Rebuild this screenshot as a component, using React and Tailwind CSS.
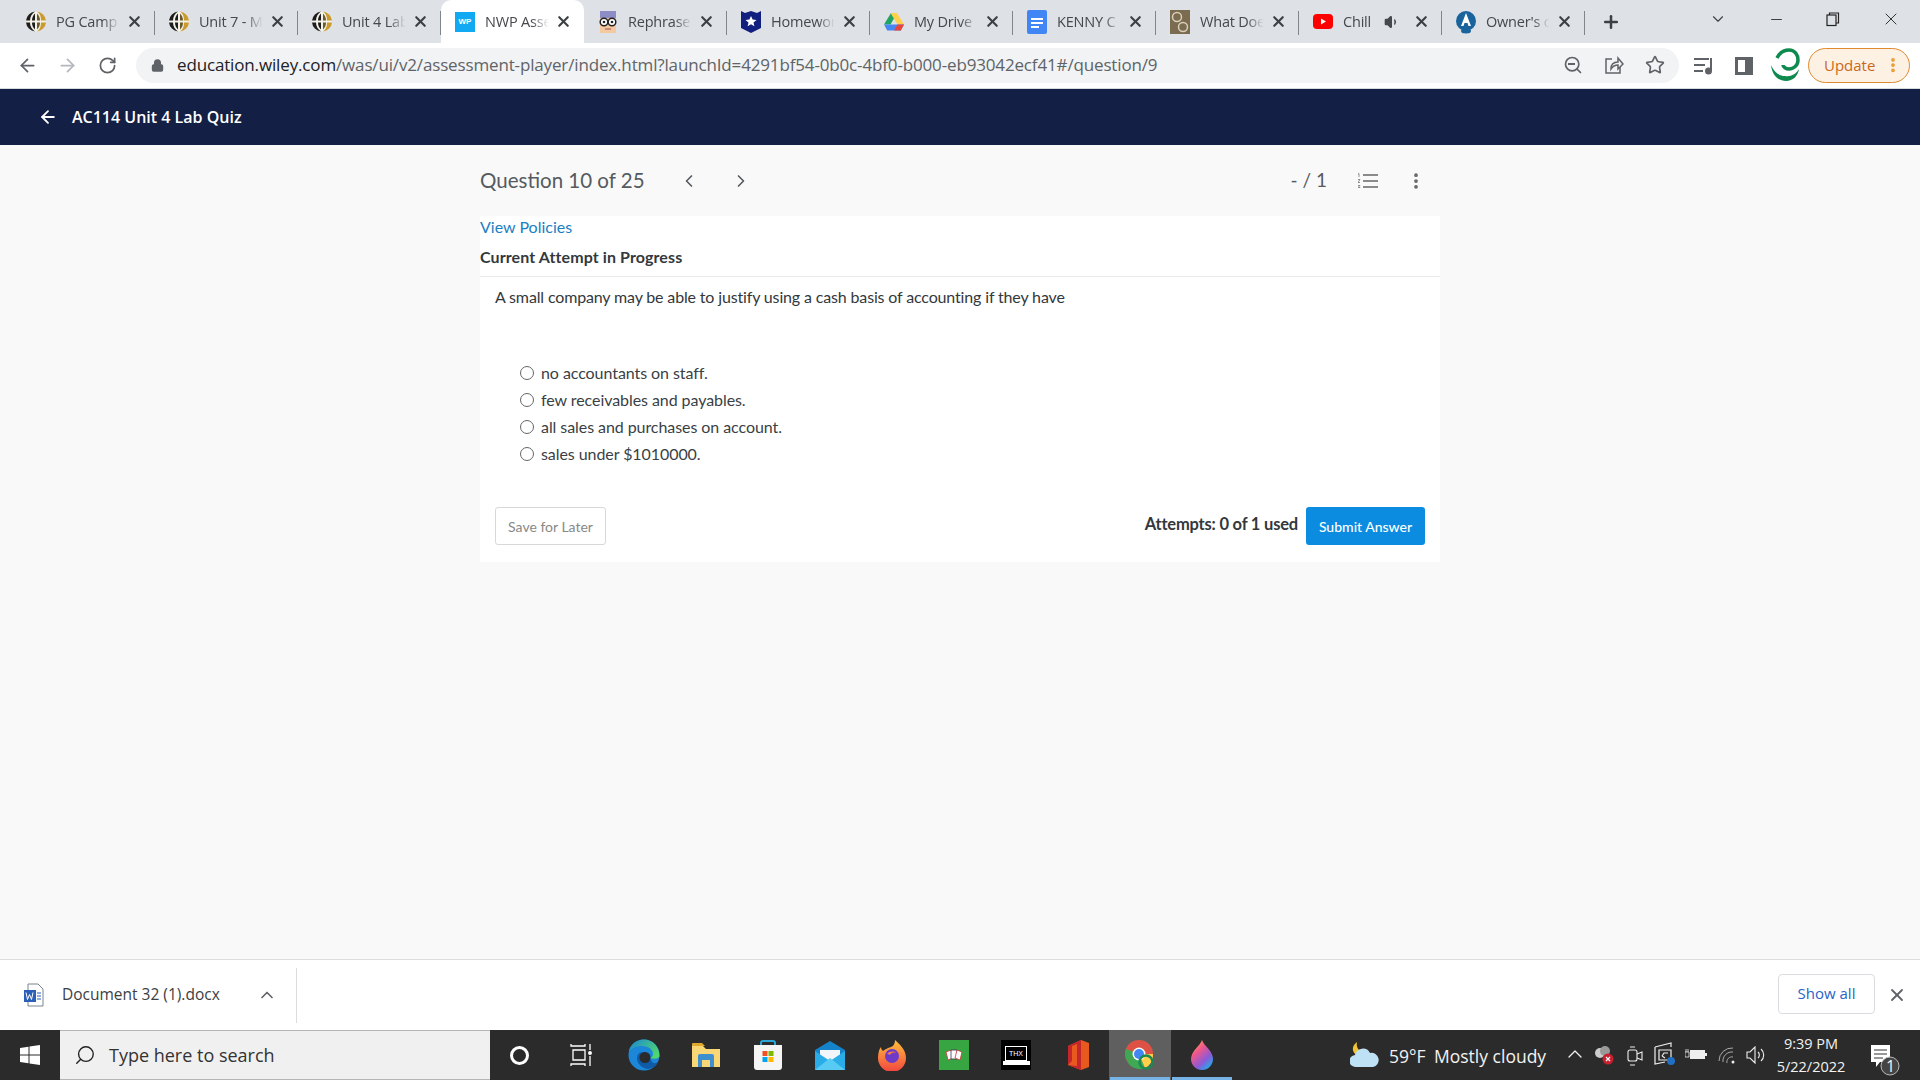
import React from "react";
import { X, ArrowLeft, ArrowRight, RotateCw, Lock, Star, ChevronLeft, ChevronRight, ChevronDown, ChevronUp, Plus, Minus, MoreVertical, Search, Volume1 } from "lucide-react";

const ui = "font-['Open_Sans','Noto_Sans',sans-serif]";

function GlobeIcon() {
  return (
    <svg width="23" height="23" viewBox="0 0 22 22">
      <circle cx="11" cy="11" r="10" fill="#f4f1e6" />
      <path d="M12 1a10 10 0 0 1 9 9h-5c0-4-1-7-4-9z" fill="#c99a2e" />
      <path d="M12 21a10 10 0 0 0 9-9h-5c0 4-1 7-4 9z" fill="#c99a2e" />
      <path d="M10 1a10 10 0 0 0-9 9h4c0-4 2-7 5-9z" fill="#1d1d1d" />
      <path d="M10 21a10 10 0 0 1-9-9h4c0 4 2 7 5 9z" fill="#1d1d1d" />
      <path d="M7 10c0-3 1-5 3-7v7zM7 12c0 3 1 5 3 7v-7z" fill="#1d1d1d" />
      <path d="M12 3c2 2 3 4 3 7h-3zM12 19c2-2 3-4 3-7h-3z" fill="#6b5a2c" />
    </svg>
  );
}

function WpIcon() {
  return (
    <div className="w-5 h-5 bg-[#10a9f2] flex items-center justify-center text-white text-[8px] font-bold font-['Liberation_Sans',sans-serif]">
      WP
    </div>
  );
}

function FaceIcon() {
  return (
    <svg width="20" height="24" viewBox="0 0 20 24">
      <rect x="2" y="1" width="16" height="22" fill="#f4c9a0" />
      <rect x="2" y="1" width="16" height="7" fill="#8e8cc4" />
      <circle cx="6" cy="12" r="3.800" fill="#fff" stroke="#222" strokeWidth="1.500" />
      <circle cx="14" cy="12" r="3.800" fill="#fff" stroke="#222" strokeWidth="1.500" />
      <circle cx="6" cy="12" r="1.300" fill="#222" />
      <circle cx="14" cy="12" r="1.300" fill="#222" />
      <path d="M7 19h6" stroke="#a66" strokeWidth="1.200" />
    </svg>
  );
}

function ShieldIcon() {
  return (
    <svg width="20" height="24" viewBox="0 0 20 24">
      <path d="M0 1l4 2 6-2 6 2 4-2v17l-10 5-10-5z" fill="#11207f" />
      <path d="M10 6l1.600 3.600 3.900.4-3 2.500.9 3.800-3.400-2-3.400 2 .9-3.800-3-2.500 3.900-.4z" fill="#fff" />
    </svg>
  );
}

function DriveIcon() {
  return (
    <svg width="20" height="18" viewBox="0 0 20 18">
      <path d="M7 0h6l-6.500 11.500h-6.500z" fill="#1fa463" />
      <path d="M13 0l7 11.500h-6.500l-7-11.500z" fill="#ffd04b" />
      <path d="M0 11.500h20l-3.200 6h-13.600z" fill="#4687f4" />
      <path d="M13.500 11.500h6.500l-3.200 6h-6.800z" fill="#e8453c" />
    </svg>
  );
}

function DocsIcon() {
  return (
    <svg width="20" height="24" viewBox="0 0 20 24">
      <rect width="20" height="24" rx="2" fill="#4285f4" />
      <path d="M4 9h12M4 13h12M4 17h8" stroke="#fff" strokeWidth="2" />
    </svg>
  );
}

function WhatIcon() {
  return (
    <svg width="20" height="24" viewBox="0 0 20 24">
      <rect width="20" height="24" fill="#7b6c50" />
      <circle cx="7" cy="7" r="4.500" fill="none" stroke="#d8d0bc" strokeWidth="1.500" />
      <circle cx="13" cy="17" r="4.500" fill="none" stroke="#d8d0bc" strokeWidth="1.500" />
    </svg>
  );
}

function YoutubeIcon() {
  return (
    <svg width="20" height="15" viewBox="0 0 20 15">
      <rect width="20" height="15" rx="4" fill="#f00" />
      <path d="M8 4.500l5 3-5 3z" fill="#fff" />
    </svg>
  );
}

function OwnerIcon() {
  return (
    <svg width="20" height="24" viewBox="0 0 20 24">
      <circle cx="10" cy="11" r="10" fill="#1a649e" />
      <path d="M10 3l5 13h-2.500l-1-3h-3l-1 3h-2.500z" fill="#fff" />
      <ellipse cx="10" cy="21" rx="5" ry="2.500" fill="#1a649e" />
    </svg>
  );
}

const tabs = [
  { icon: <GlobeIcon />, title: "PG Camp" },
  { icon: <GlobeIcon />, title: "Unit 7 - M" },
  { icon: <GlobeIcon />, title: "Unit 4 Lab" },
  { icon: <WpIcon />, title: "NWP Asse", active: true },
  { icon: <FaceIcon />, title: "Rephrase" },
  { icon: <ShieldIcon />, title: "Homewor" },
  { icon: <DriveIcon />, title: "My Drive" },
  { icon: <DocsIcon />, title: "KENNY C" },
  { icon: <WhatIcon />, title: "What Doe" },
  { icon: <YoutubeIcon />, title: "Chill", sound: true },
  { icon: <OwnerIcon />, title: "Owner's c" },
];

function Tab({ tab }) {
  return (
    <div
      className={
        "relative w-[143px] h-[43px] shrink-0 flex items-center pl-[13px] pr-[12px] " +
        (tab.active ? "bg-white rounded-t-[10px]" : "")
      }
    >
      <div className="w-[22px] flex justify-center shrink-0">{tab.icon}</div>
      <span className="ml-[9px] w-[67px] overflow-hidden whitespace-nowrap text-[14.500px] tracking-[-0.2px] text-[#45484c] [mask-image:linear-gradient(to_right,black_70%,transparent_95%)]">
        {tab.title}
      </span>
      {tab.sound && <Volume1 size={16} className="absolute left-[85px] text-[#45484c] fill-[#45484c]" />}
      <X size={17} strokeWidth={3} className="absolute right-[12px] text-[#3c4043]" />
      {!tab.active && <div className="absolute right-0 top-[11px] h-[24px] w-px bg-[#80868b]" />}
    </div>
  );
}

function TabStrip() {
  return (
    <div className={"h-[43px] bg-[#dee1e6] flex pl-[12px] shrink-0 " + ui}>
      {tabs.map((tab, i) => (
        <Tab key={i} tab={tab} />
      ))}
      <div className="w-[52px] flex items-center justify-center">
        <Plus size={20} strokeWidth={3} className="text-[#3c4043]" />
      </div>
      <div className="flex-1 relative">
        <ChevronDown size={18} strokeWidth={1.5} className="absolute left-[72px] top-[10px] text-[#3c4043]" />
        <Minus size={17} strokeWidth={1.2} className="absolute left-[131px] top-[11px] text-[#222]" />
        <svg width="14" height="15" viewBox="0 0 14 15" className="absolute left-[189px] top-[12px]">
          <rect x="1" y="3" width="9" height="10.500" fill="none" stroke="#222" strokeWidth="1.200" />
          <path d="M3.500 3V1h9v10h-2.500" fill="none" stroke="#222" strokeWidth="1.200" />
        </svg>
        <X size={20} strokeWidth={1.1} className="absolute left-[244px] top-[9px] text-[#222]" />
      </div>
    </div>
  );
}

function ToolBar() {
  return (
    <div className={"h-[46px] bg-white border-b border-[#d6dbe2] flex items-center shrink-0 " + ui}>
      <ArrowLeft size={21} strokeWidth={2} className="ml-[17px] text-[#5f6368]" />
      <ArrowRight size={21} strokeWidth={2} className="ml-[19px] text-[#b4b7bb]" />
      <RotateCw size={19} strokeWidth={2.2} className="ml-[20px] text-[#5f6368]" />
      <div className="ml-[19px] w-[1543px] h-[35px] -mt-[1px] bg-[#f1f3f4] rounded-full flex items-center">
        <Lock size={13} strokeWidth={3} className="ml-[15px] text-[#5f6368] fill-[#5f6368]" />
        <span className="ml-[13px] text-[17px] tracking-[-0.15px] text-[#202124] whitespace-nowrap">
          education.wiley.com<span className="text-[#5f6368]">/was/ui/v2/assessment-player/index.html?launchId=4291bf54-0b0c-4bf0-b000-eb93042ecf41#/question/9</span>
        </span>
        <div className="ml-auto flex items-center mr-[14px] gap-[21px] text-[#5f6368]">
          <div className="relative w-[20px] h-[20px]">
            <Search size={20} strokeWidth={2} />
            <div className="absolute left-[5px] top-[7.500px] w-[7px] h-[2px] bg-[#5f6368]" />
          </div>
          <svg width="20" height="20" viewBox="0 0 20 20" fill="none" stroke="#5f6368" strokeWidth="1.500">
            <path d="M8 4H2v14h14v-6" />
            <path d="M7 14c0-5 3-7 7-7V3l5 6-5 5v-4c-3 0-5 1-7 4z" />
          </svg>
          <Star size={20} strokeWidth={2} />
        </div>
      </div>
      <svg width="20" height="18" viewBox="0 0 20 18" fill="none" stroke="#5f6368" strokeWidth="2" className="ml-[15px]">
        <path d="M0 2h15M0 8h11M0 14h9" />
        <path d="M17 1v13" />
        <circle cx="14.500" cy="14" r="2.500" fill="#5f6368" />
      </svg>
      <div className="ml-[21px] w-[18px] h-[18px] border-[3px] border-r-[8px] border-[#5f6368]" />
      <svg width="30" height="34" viewBox="0 0 30 34" className="ml-[17px] -mt-[1px]">
        <path d="M1 17c1 10 7 16 15 16 7 0 12-5 13-12-3 5-8 8-14 7-6 0-11-4-14-11z" fill="#0f8a4f" />
        <path d="M7 10C10 4 15 2 19 2c6 0 9 5 9 10 0 5-4 9-9 9-3 0-6-2-6-4" fill="none" stroke="#0f8a4f" strokeWidth="3.500" />
      </svg>
      <div className="ml-[8px] w-[102px] h-[35px] bg-[#fdf1e4] border border-[#e08a2f] rounded-full flex items-center pl-[15px] -mt-[1px]">
        <span className="text-[15px] text-[#c8691a]">Update</span>
        <MoreVertical size={18} strokeWidth={3} className="ml-[9px] text-[#e89a2e]" />
      </div>
    </div>
  );
}

function NumberedList() {
  return (
    <svg width="20" height="16" viewBox="0 0 20 16" stroke="#666" fill="none">
      <path d="M5 2h15M5 8h15M5 14h15" strokeWidth="1.500" />
      <path d="M0 1l1-.5v3.500M0 6.500h2l-2 3h2M0 12.500h2l-1 1 1 1h-2" strokeWidth="0.700" />
    </svg>
  );
}

function Option({ label }) {
  return (
    <label className="h-[27px] flex items-center pl-[40px]">
      <span className="w-[14px] h-[14px] rounded-full border border-[#666] bg-white" />
      <span className="ml-[7px] text-[16px] tracking-[-0.07px] text-[#3a3f44]">{label}</span>
    </label>
  );
}

function QuizPanel() {
  return (
    <div className="w-[960px] mx-auto font-['Lato',sans-serif]">
      <div className="h-[71px] flex items-center text-[#555b60]">
        <span className="text-[20.500px] w-[199px]">Question 10 of 25</span>
        <ChevronLeft size={20} strokeWidth={2} />
        <ChevronRight size={20} strokeWidth={2} className="ml-[32px]" />
        <span className="ml-auto text-[19px]">- / 1</span>
        <div className="ml-[31px]">
          <NumberedList />
        </div>
        <MoreVertical size={20} strokeWidth={2.5} className="ml-[28px] mr-[14px] text-[#666]" />
      </div>
      <div className="bg-white h-[346px] flex flex-col">
        <a className="h-[22px] text-[16px] text-[#1b80c4] leading-[22px]">View Policies</a>
        <div className="h-[39px] border-b border-[#e9e9e9] flex items-center text-[16px] tracking-[0.1px] font-bold text-[#33383c]">
          Current Attempt in Progress
        </div>
        <div className="pl-[15px] pt-[8px] text-[16px] tracking-[-0.15px] text-[#33383c] leading-[24px]">
          A small company may be able to justify using a cash basis of accounting if they have
        </div>
        <div className="mt-[50px] flex flex-col">
          <Option label="no accountants on staff." />
          <Option label="few receivables and payables." />
          <Option label="all sales and purchases on account." />
          <Option label="sales under $1010000." />
        </div>
        <div className="mt-[40px] px-[15px] flex items-center">
          <button className="w-[111px] h-[38px] border border-[#d8d8d8] rounded-[3px] text-[14px] text-[#888]">Save for Later</button>
          <span className="ml-auto text-[16.500px] font-bold text-[#33383c] -mt-[3px] tracking-[-0.2px]">Attempts: 0 of 1 used</span>
          <button className="ml-[8px] w-[119px] h-[38px] bg-[#0b8ce0] rounded-[3px] text-[14px] font-medium text-white">Submit Answer</button>
        </div>
      </div>
    </div>
  );
}

function DownloadShelf() {
  return (
    <div className={"h-[71px] bg-white border-t border-[#dcdcdc] flex items-center shrink-0 " + ui}>
      <svg width="20" height="24" viewBox="0 0 20 24" className="ml-[24px]">
        <path d="M4 1h10l5 5v17H4z" fill="#fff" stroke="#7a8290" />
        <rect x="0" y="7" width="12" height="12" fill="#2b5fb8" />
        <path d="M2 9.500l1.500 7 2-5 2 5 1.500-7" fill="none" stroke="#fff" strokeWidth="1" />
        <path d="M13 10h4M13 13h4M13 16h4" stroke="#2b5fb8" />
      </svg>
      <span className="ml-[18px] w-[195px] text-[15.500px] text-[#3c4043]">Document 32 (1).docx</span>
      <ChevronUp size={20} strokeWidth={2} className="text-[#5f6368]" />
      <div className="ml-[19px] h-[55px] w-px bg-[#dcdcdc]" />
      <button className="ml-auto w-[97px] h-[40px] border border-[#dadce0] rounded-[4px] text-[15px] text-[#2a64c8] -mt-[3px]">Show all</button>
      <X size={20} strokeWidth={2.2} className="ml-[12px] mr-[13px] text-[#5f6368]" />
    </div>
  );
}

function AppSlot({ children, active, running }) {
  return (
    <div className={"relative w-[62px] h-full flex items-center justify-center " + (active ? "bg-[#5f5f5f]" : "")}>
      {children}
      {running && <div className="absolute bottom-0 left-[1px] right-[1px] h-[3px] bg-[#76b4e8]" />}
    </div>
  );
}

function TaskBar() {
  return (
    <div className={"h-[50px] bg-[#2b2b2b] flex items-center shrink-0 text-white " + ui}>
      <div className="w-[60px] flex justify-center">
        <svg width="20" height="20" viewBox="0 0 20 20" fill="#fff">
          <path d="M0 3l8.500-1.200v7.700H0zM9.500 1.600L20 0v9.500H9.500zM0 10.500h8.500v7.700L0 17zM9.500 10.500H20V20L9.500 18.400z" />
        </svg>
      </div>
      <div className="w-[430px] h-full bg-[#f0f0f0] border-y border-[#b5b5b5] flex items-center">
        <Search size={22} strokeWidth={1.5} className="ml-[14px] text-[#222] -scale-x-100" />
        <span className="ml-[13px] text-[18px] text-[#333]">Type here to search</span>
      </div>
      <div className="w-[59px] flex justify-center">
        <div className="w-[19px] h-[19px] rounded-full border-[3px] border-white" />
      </div>
      <div className="w-[64px] flex justify-center">
        <svg width="22" height="24" viewBox="0 0 22 24" fill="none" stroke="#fff" strokeWidth="1.300">
          <path d="M1 1v2h14V1M3 7h12v10H3zM1 23v-2h14v2M20 1v6M20 13v10" />
          <circle cx="20" cy="10" r="1.300" fill="#fff" />
        </svg>
      </div>
      <AppSlot>
        <svg width="32" height="32" viewBox="0 0 32 32">
          <defs>
            <linearGradient id="edgeTop" x1="0" y1="0" x2="1" y2="0.600">
              <stop offset="0" stopColor="#1a86d6" />
              <stop offset="1" stopColor="#4fd66f" />
            </linearGradient>
          </defs>
          <circle cx="16" cy="16" r="15.500" fill="#1c86d8" />
          <path d="M31.500 17C31.500 7 24 .5 16 .5 8 .5 2 6 1 12c4-4 9-5 13-5 7 0 11 4 11 8 0 2-1 3-3 4 3 1 6 1 8 0 1-1 1.500-1 1.500-2z" fill="url(#edgeTop)" />
          <path d="M22 19c0-4-3-6-7-6-4 0-6 3-6 6 0 5 4 10 11 11 5-1 8-3 10-7-3 2-6 2-8-4z" fill="#0f5ba8" />
          <circle cx="17" cy="18.500" r="5.500" fill="#2b2b2b" />
        </svg>
      </AppSlot>
      <AppSlot>
        <svg width="28" height="24" viewBox="0 0 28 24">
          <path d="M0 3h11l3 3h14v18H0z" fill="#f9d776" />
          <path d="M0 1a1 1 0 0 1 1-1h9l3 3H0z" fill="#e0a92e" />
          <path d="M6 13a2 2 0 0 1 2-2h12a2 2 0 0 1 2 2v11H6z" fill="#3d8fd0" />
          <path d="M10 17h8v7h-8z" fill="#f9d776" />
        </svg>
      </AppSlot>
      <AppSlot>
        <svg width="30" height="30" viewBox="0 0 30 30">
          <path d="M8 6V3a2 2 0 0 1 2-2h10a2 2 0 0 1 2 2v3" fill="none" stroke="#2aa7d6" strokeWidth="2" />
          <path d="M1 5h28v22a3 3 0 0 1-3 3H4a3 3 0 0 1-3-3z" fill="#f5f5f5" />
          <path d="M9.500 11h5v5h-5z" fill="#f25022" />
          <path d="M15.500 11h5v5h-5z" fill="#7fba00" />
          <path d="M9.500 17h5v5h-5z" fill="#00a4ef" />
          <path d="M15.500 17h5v5h-5z" fill="#ffb900" />
        </svg>
      </AppSlot>
      <AppSlot>
        <svg width="30" height="29" viewBox="0 0 30 29">
          <path d="M0 9L15 0l15 9v20H0z" fill="#1583c9" />
          <path d="M5 9h20v6l-10 6-10-6z" fill="#f2f6fa" />
          <path d="M0 10l15 10 15-10v19H0z" fill="#2aace8" />
          <path d="M0 29l15-12 15 12z" fill="#58cbf5" />
        </svg>
      </AppSlot>
      <AppSlot>
        <svg width="30" height="31" viewBox="0 0 30 31">
          <defs>
            <linearGradient id="foxBody" x1="0.500" y1="0" x2="0.500" y2="1">
              <stop offset="0" stopColor="#ffc13a" />
              <stop offset="1" stopColor="#f2453f" />
            </linearGradient>
          </defs>
          <path d="M18 0c4 4 11 9 11 18a14 14 0 0 1-28 0c0-4 1-9 3-11 0 2 1 3 2 4 2-2 5-3 8-4 3-1 4-4 4-7z" fill="url(#foxBody)" />
          <circle cx="15" cy="16" r="7" fill="#6e3bc9" />
          <path d="M10 14c3-3 7-3 9-1-3-1-5 0-6 2-1-1-2-1-3-1z" fill="#ff7a3a" />
        </svg>
      </AppSlot>
      <AppSlot>
        <div className="w-[30px] h-[30px] bg-[#37a642] flex items-center justify-center">
          <svg width="20" height="14" viewBox="0 0 20 14">
            <path d="M2 4l5-2 2 8-5 2z" fill="#fff" stroke="#c33" strokeWidth="0.800" />
            <path d="M7 2h6v9H7z" fill="#fff" stroke="#335" strokeWidth="0.800" />
            <path d="M13 2l5 2-2 8-5-2z" fill="#fff" stroke="#c33" strokeWidth="0.800" />
          </svg>
        </div>
      </AppSlot>
      <AppSlot>
        <div className="w-[30px] h-[30px] bg-black flex flex-col items-center justify-center">
          <div className="w-[22px] h-[15px] border border-white text-[7px] leading-[13px] text-center font-['Liberation_Sans',sans-serif]">THX</div>
          <div className="w-[27px] h-[4px] bg-white" />
        </div>
      </AppSlot>
      <AppSlot>
        <svg width="24" height="30" viewBox="0 0 24 30">
          <path d="M2 6L15 0l8 3v24l-8 3-13-5z" fill="#e8591f" />
          <path d="M15 0v30L2 25l9 1V4L6 6v15l-4 4V6z" fill="#c4262c" />
        </svg>
      </AppSlot>
      <AppSlot active running>
        <svg width="32" height="32" viewBox="0 0 32 32">
          <circle cx="15" cy="15" r="14" fill="#de5246" />
          <path d="M15 15L3 22a14 14 0 0 1-1-12z" fill="#3fa855" />
          <path d="M3 22L15 15 l6 14a14 14 0 0 1-18-7z" fill="#3fa855" />
          <path d="M15 15h14a14 14 0 0 1-8 14z" fill="#ffd04b" />
          <circle cx="15" cy="15" r="6.500" fill="#fff" />
          <circle cx="15" cy="15" r="5" fill="#4285f4" />
          <circle cx="22" cy="23" r="6.500" fill="none" stroke="#1a8a52" strokeWidth="2.500" />
        </svg>
      </AppSlot>
      <AppSlot running>
        <svg width="24" height="30" viewBox="0 0 24 30">
          <defs>
            <linearGradient id="drop" x1="0" y1="0" x2="0.700" y2="1">
              <stop offset="0" stopColor="#ffc93c" />
              <stop offset="0.400" stopColor="#f0568a" />
              <stop offset="0.750" stopColor="#8a5ad8" />
              <stop offset="1" stopColor="#28a6e8" />
            </linearGradient>
          </defs>
          <path d="M12 0c2 6 11 11 11 19a11 11 0 0 1-22 0C1 11 10 6 12 0z" fill="url(#drop)" />
        </svg>
      </AppSlot>
      <div className="flex-1 relative h-full text-[#f2f2f2]">
        <svg width="30" height="26" viewBox="0 0 30 26" className="absolute left-[117px] top-[12px]">
          <path d="M7 0c-1 5 1 9 7 10L7 13C2 11 1 4 7 0z" fill="#f4c430" />
          <path d="M6 25a6 6 0 0 1-1-12 8 8 0 0 1 15-2 7 7 0 0 1 3 14z" fill="#bfe1f5" />
        </svg>
        <span className="absolute left-[156px] top-[13px] text-[17.500px] whitespace-nowrap">59°F</span>
        <span className="absolute left-[201px] top-[13px] text-[17.500px] whitespace-nowrap">Mostly cloudy</span>
        <ChevronUp size={24} strokeWidth={1.3} className="absolute left-[330px] top-[12px]" />
        <svg width="22" height="20" viewBox="0 0 22 20" className="absolute left-[360px] top-[15px]">
          <circle cx="7" cy="8" r="5" fill="#ccc" />
          <circle cx="12" cy="6" r="5" fill="#999" />
          <circle cx="15" cy="14" r="5.500" fill="#c8202f" />
          <path d="M13 12l4 4M17 12l-4 4" stroke="#fff" strokeWidth="1.200" />
        </svg>
        <svg width="16" height="22" viewBox="0 0 16 22" fill="none" stroke="#eee" strokeWidth="1.100" className="absolute left-[394px] top-[15px]">
          <rect x="1" y="5" width="9" height="11" rx="2" />
          <path d="M10 9l5-2v8l-5-2M3 2h5M3 20h5" />
        </svg>
        <svg width="22" height="24" viewBox="0 0 22 24" fill="none" stroke="#eee" strokeWidth="1.200" className="absolute left-[421px] top-[12px]">
          <path d="M1 5l16-4v4M1 5v17l10-2" />
          <path d="M5 8h12v10H5z" />
          <path d="M8 14l2-3h4M8 14l3 2" />
          <circle cx="17" cy="19" r="4" fill="#1f6fc4" stroke="none" />
        </svg>
        <svg width="22" height="16" viewBox="0 0 22 16" className="absolute left-[452px] top-[17px]">
          <path d="M0 5h4v5H0zM1 2v3M3 2v3" stroke="#eee" fill="none" strokeWidth="0.800" />
          <rect x="5" y="3" width="15" height="9" fill="#eee" />
          <rect x="20" y="6" width="2" height="3" fill="#eee" />
        </svg>
        <svg width="20" height="18" viewBox="0 0 20 18" fill="none" stroke="#aaa" strokeWidth="1" className="absolute left-[485px] top-[17px]">
          <path d="M1 14a13 13 0 0 1 14-13M5 15a9 9 0 0 1 10-10M9 16a5 5 0 0 1 6-6" />
          <circle cx="15" cy="15" r="1.500" fill="#eee" stroke="none" />
        </svg>
        <svg width="22" height="18" viewBox="0 0 22 18" fill="none" stroke="#eee" strokeWidth="1.100" className="absolute left-[513px] top-[16px]">
          <path d="M1 6h3l5-5v16l-5-5H1zM12 6a4 4 0 0 1 0 6M15 3a8 8 0 0 1 0 12" />
        </svg>
        <div className="absolute left-[539px] w-[78px] top-[0px] flex flex-col items-center text-[14.500px] leading-[23px] pt-[2px]">
          <span>9:39 PM</span>
          <span>5/22/2022</span>
        </div>
        <svg width="32" height="32" viewBox="0 0 32 32" className="absolute left-[637px] top-[14px]">
          <path d="M1 1h19v17h-10l-4 5v-5H1z" fill="#fff" />
          <path d="M4 6h13M4 10h13M4 14h9" stroke="#333" strokeWidth="1" />
          <circle cx="20" cy="22" r="9" fill="#444" stroke="#bbb" strokeWidth="1" />
        </svg>
        <span className="absolute left-[653px] top-[26px] text-[16px] leading-[20px]">1</span>
      </div>
    </div>
  );
}

export default function App() {
  return (
    <div className="w-[1920px] h-[1080px] flex flex-col overflow-hidden bg-[#f9f9f9]">
      <TabStrip />
      <ToolBar />
      <div className={"h-[56px] bg-[#141f45] flex items-center shrink-0 text-white " + ui}>
        <ArrowLeft size={20} strokeWidth={2.2} className="ml-[38px]" />
        <span className="ml-[14px] text-[16px] font-semibold">AC114 Unit 4 Lab Quiz</span>
      </div>
      <div className="flex-1">
        <QuizPanel />
      </div>
      <DownloadShelf />
      <TaskBar />
    </div>
  );
}
